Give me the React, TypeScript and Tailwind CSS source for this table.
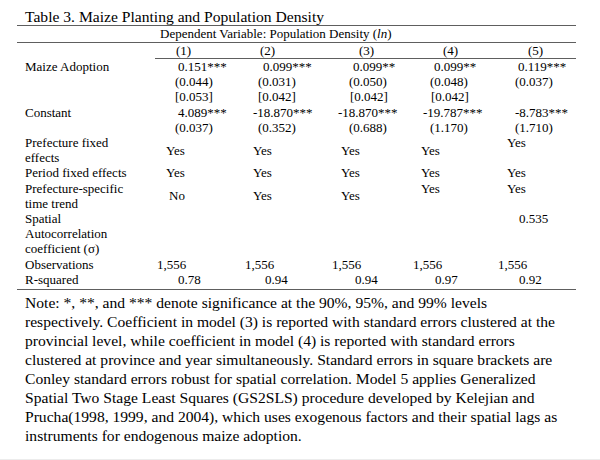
import React from "react";

const grid = "grid grid-cols-[138px_85px_85px_85px_85px_81px] whitespace-nowrap";

function Row({ label, h = "h-[15.2px]", children }: { label: React.ReactNode; h?: string; children?: React.ReactNode }) {
  return (
    <div className={`${grid} ${h}`}>
      <div className="pl-[8px]">{label}</div>
      {children}
    </div>
  );
}

const noteLines = [
  "Note: *, **, and *** denote significance at the 90%, 95%, and 99% levels",
  "respectively. Coefficient in model (3) is reported with standard errors clustered at the",
  "provincial level, while coefficient in model (4) is reported with standard errors",
  "clustered at province and year simultaneously. Standard errors in square brackets are",
  "Conley standard errors robust for spatial correlation. Model 5 applies Generalized",
  "Spatial Two Stage Least Squares (GS2SLS) procedure developed by Kelejian and",
  "Prucha(1998, 1999, and 2004), which uses exogenous factors and their spatial lags as",
  "instruments for endogenous maize adoption.",
];

export default function App() {
  return (
    <div className="w-[600px] h-[460px] bg-white text-black font-['Liberation_Serif',serif] border-b border-[#ececec]">
      <div className="ml-[17px] w-[559px] pt-[8px]">
        {/* Title */}
        <div className="pl-[8px] h-[17px] text-[15.6px] leading-[17px] whitespace-nowrap">
          Table 3. Maize Planting and Population Density
        </div>
        <div className="border-t border-[#5e5e5e]" />

        <div className="text-[13px] leading-[15.2px]">
          {/* Dependent variable */}
          <div className="h-[16px] pl-[143px] whitespace-nowrap">
            Dependent Variable: Population Density (<i>ln</i>)
          </div>
          <div className="border-t border-[#5e5e5e]" />

          {/* Column headers */}
          <Row label="" h="h-[15px]">
            <div className="pl-[21px]">(1)</div>
            <div className="pl-[20px]">(2)</div>
            <div className="pl-[34px]">(3)</div>
            <div className="pl-[33px]">(4)</div>
            <div className="pl-[33px]">(5)</div>
          </Row>
          <div className="ml-[138px] border-t border-[#5e5e5e]" />

          <Row label="Maize Adoption">
            <div className="pl-[23px]">0.151***</div>
            <div className="pl-[23px]">0.099***</div>
            <div className="pl-[28px]">0.099**</div>
            <div className="pl-[24px]">0.099**</div>
            <div className="pl-[23px]">0.119***</div>
          </Row>
          <Row label="">
            <div className="pl-[20px]">(0.044)</div>
            <div className="pl-[18px]">(0.031)</div>
            <div className="pl-[24px]">(0.050)</div>
            <div className="pl-[20px]">(0.048)</div>
            <div className="pl-[20px]">(0.037)</div>
          </Row>
          <Row label="">
            <div className="pl-[20px]">[0.053]</div>
            <div className="pl-[18px]">[0.042]</div>
            <div className="pl-[25px]">[0.042]</div>
            <div className="pl-[21px]">[0.042]</div>
            <div />
          </Row>
          <Row label="Constant">
            <div className="pl-[23px]">4.089***</div>
            <div className="pl-[13px]">-18.870***</div>
            <div className="pl-[13px]">-18.870***</div>
            <div className="pl-[13px]">-19.787***</div>
            <div className="pl-[20px]">-8.783***</div>
          </Row>
          <Row label="">
            <div className="pl-[20px]">(0.037)</div>
            <div className="pl-[18px]">(0.352)</div>
            <div className="pl-[24px]">(0.688)</div>
            <div className="pl-[20px]">(1.170)</div>
            <div className="pl-[20px]">(1.710)</div>
          </Row>
          <Row
            h="h-[30.4px]"
            label={
              <>
                Prefecture fixed
                <br />
                effects
              </>
            }
          >
            <div className="pl-[11px] self-center">Yes</div>
            <div className="pl-[13px] self-center">Yes</div>
            <div className="pl-[16px] self-center">Yes</div>
            <div className="pl-[11px] self-center">Yes</div>
            <div className="pl-[12px]">Yes</div>
          </Row>
          <Row label="Period fixed effects">
            <div className="pl-[11px]">Yes</div>
            <div className="pl-[13px]">Yes</div>
            <div className="pl-[16px]">Yes</div>
            <div className="pl-[11px]">Yes</div>
            <div className="pl-[12px]">Yes</div>
          </Row>
          <Row
            h="h-[30.4px]"
            label={
              <>
                Prefecture-specific
                <br />
                time trend
              </>
            }
          >
            <div className="pl-[14px] self-center">No</div>
            <div className="pl-[13px] self-center">Yes</div>
            <div className="pl-[16px] self-center">Yes</div>
            <div className="pl-[11px]">Yes</div>
            <div className="pl-[12px]">Yes</div>
          </Row>
          <Row
            h="h-[45.6px]"
            label={
              <>
                Spatial
                <br />
                Autocorrelation
                <br />
                coefficient (σ)
              </>
            }
          >
            <div />
            <div />
            <div />
            <div />
            <div className="pl-[24px]">0.535</div>
          </Row>
          <Row label="Observations">
            <div className="pl-[2px]">1,556</div>
            <div className="pl-[5px]">1,556</div>
            <div className="pl-[7px]">1,556</div>
            <div className="pl-[3px]">1,556</div>
            <div className="pl-[3px]">1,556</div>
          </Row>
          <Row label="R-squared">
            <div className="pl-[23px]">0.78</div>
            <div className="pl-[25px]">0.94</div>
            <div className="pl-[30px]">0.94</div>
            <div className="pl-[25px]">0.97</div>
            <div className="pl-[24px]">0.92</div>
          </Row>
          <div className="h-[2px]" />
          <div className="border-t border-[#5e5e5e]" />
        </div>

        {/* Note */}
        <div className="mt-[3px] pl-[8px] text-[15.6px] leading-[19px] whitespace-nowrap">
          {noteLines.map((line) => (
            <div key={line}>{line}</div>
          ))}
        </div>
      </div>
    </div>
  );
}
